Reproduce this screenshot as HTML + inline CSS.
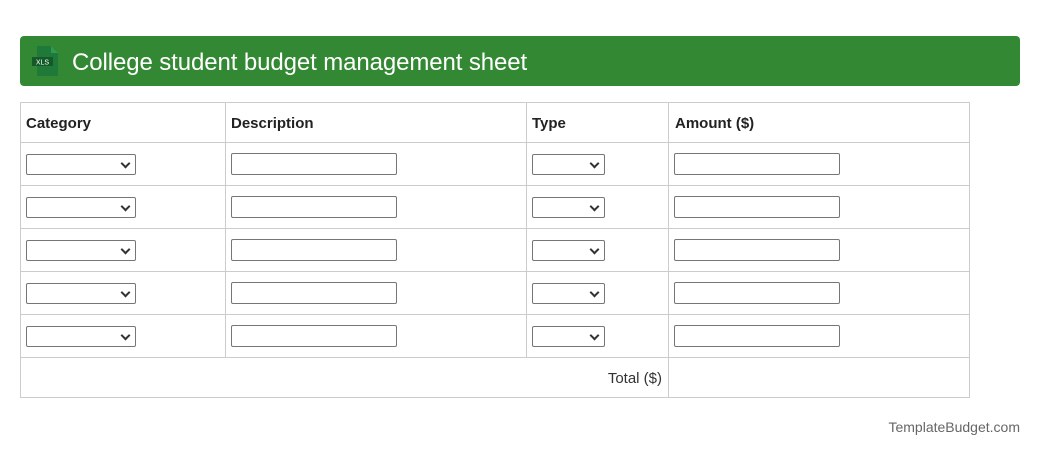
<!DOCTYPE html>
<html><head><style>
body{margin:0;width:1040px;height:455px;background:#fff;font-family:"Liberation Sans",Arial,sans-serif;position:relative;overflow:hidden}
.a{position:absolute}
.bar{left:20px;top:36px;width:1000px;height:50px;background:#338833;border-radius:4px}
.title{left:72px;top:48px;color:#fff;font-size:24px;line-height:30px;letter-spacing:-0.1px}
.h{position:absolute;background:#ccc;height:1px;left:20px;width:950px}
.v{position:absolute;background:#ccc;width:1px}
.th{position:absolute;font-weight:bold;font-size:15px;color:#222;top:115px}
.sel{position:absolute;height:19px;border:1px solid #767676;border-radius:2px;background:#fff;box-sizing:content-box}
.sel:after{content:"";position:absolute;right:6px;top:5px;width:5px;height:5px;border-right:2px solid #333;border-bottom:2px solid #333;transform:rotate(45deg)}
.inp{position:absolute;height:20px;border:1px solid #767676;border-radius:2px;background:#fff}
</style></head><body>
<div class="a bar"></div>
<svg class="a" style="left:31px;top:46px" width="30" height="30" viewBox="0 0 30 30">
<path d="M6 0h14l7 7v23H6z" fill="#1f7a3a"/><path d="M20 0v7h7z" fill="#2f9a50"/>
<rect x="1" y="11" width="21" height="9" fill="#145a28"/>
<text x="11.5" y="18.5" font-size="7" fill="#fff" text-anchor="middle" font-family="Liberation Sans">XLS</text>
</svg>
<div class="a title">College student budget management sheet</div>

<div class="h" style="top:102px"></div>
<div class="h" style="top:142px"></div>
<div class="h" style="top:185px"></div>
<div class="h" style="top:228px"></div>
<div class="h" style="top:271px"></div>
<div class="h" style="top:314px"></div>
<div class="h" style="top:357px"></div>
<div class="h" style="top:397px"></div>
<div class="v" style="left:20px;top:102px;height:296px"></div>
<div class="v" style="left:969px;top:102px;height:296px"></div>
<div class="v" style="left:225px;top:102px;height:255px"></div>
<div class="v" style="left:526px;top:102px;height:255px"></div>
<div class="v" style="left:668px;top:102px;height:296px"></div>

<div class="th" style="left:26px">Category</div>
<div class="th" style="left:231px">Description</div>
<div class="th" style="left:532px">Type</div>
<div class="th" style="left:675px">Amount ($)</div>

<div class="sel" style="left:26px;top:154px;width:108px"></div><div class="inp" style="left:231px;top:153px;width:164px"></div><div class="sel" style="left:532px;top:154px;width:71px"></div><div class="inp" style="left:674px;top:153px;width:164px"></div>
<div class="sel" style="left:26px;top:197px;width:108px"></div><div class="inp" style="left:231px;top:196px;width:164px"></div><div class="sel" style="left:532px;top:197px;width:71px"></div><div class="inp" style="left:674px;top:196px;width:164px"></div>
<div class="sel" style="left:26px;top:240px;width:108px"></div><div class="inp" style="left:231px;top:239px;width:164px"></div><div class="sel" style="left:532px;top:240px;width:71px"></div><div class="inp" style="left:674px;top:239px;width:164px"></div>
<div class="sel" style="left:26px;top:283px;width:108px"></div><div class="inp" style="left:231px;top:282px;width:164px"></div><div class="sel" style="left:532px;top:283px;width:71px"></div><div class="inp" style="left:674px;top:282px;width:164px"></div>
<div class="sel" style="left:26px;top:326px;width:108px"></div><div class="inp" style="left:231px;top:325px;width:164px"></div><div class="sel" style="left:532px;top:326px;width:71px"></div><div class="inp" style="left:674px;top:325px;width:164px"></div>

<div class="a" style="right:378px;top:370px;font-size:15px;color:#333">Total ($)</div>
<div class="a" style="right:20px;top:419px;font-size:14px;color:#666">TemplateBudget.com</div>
</body></html>
